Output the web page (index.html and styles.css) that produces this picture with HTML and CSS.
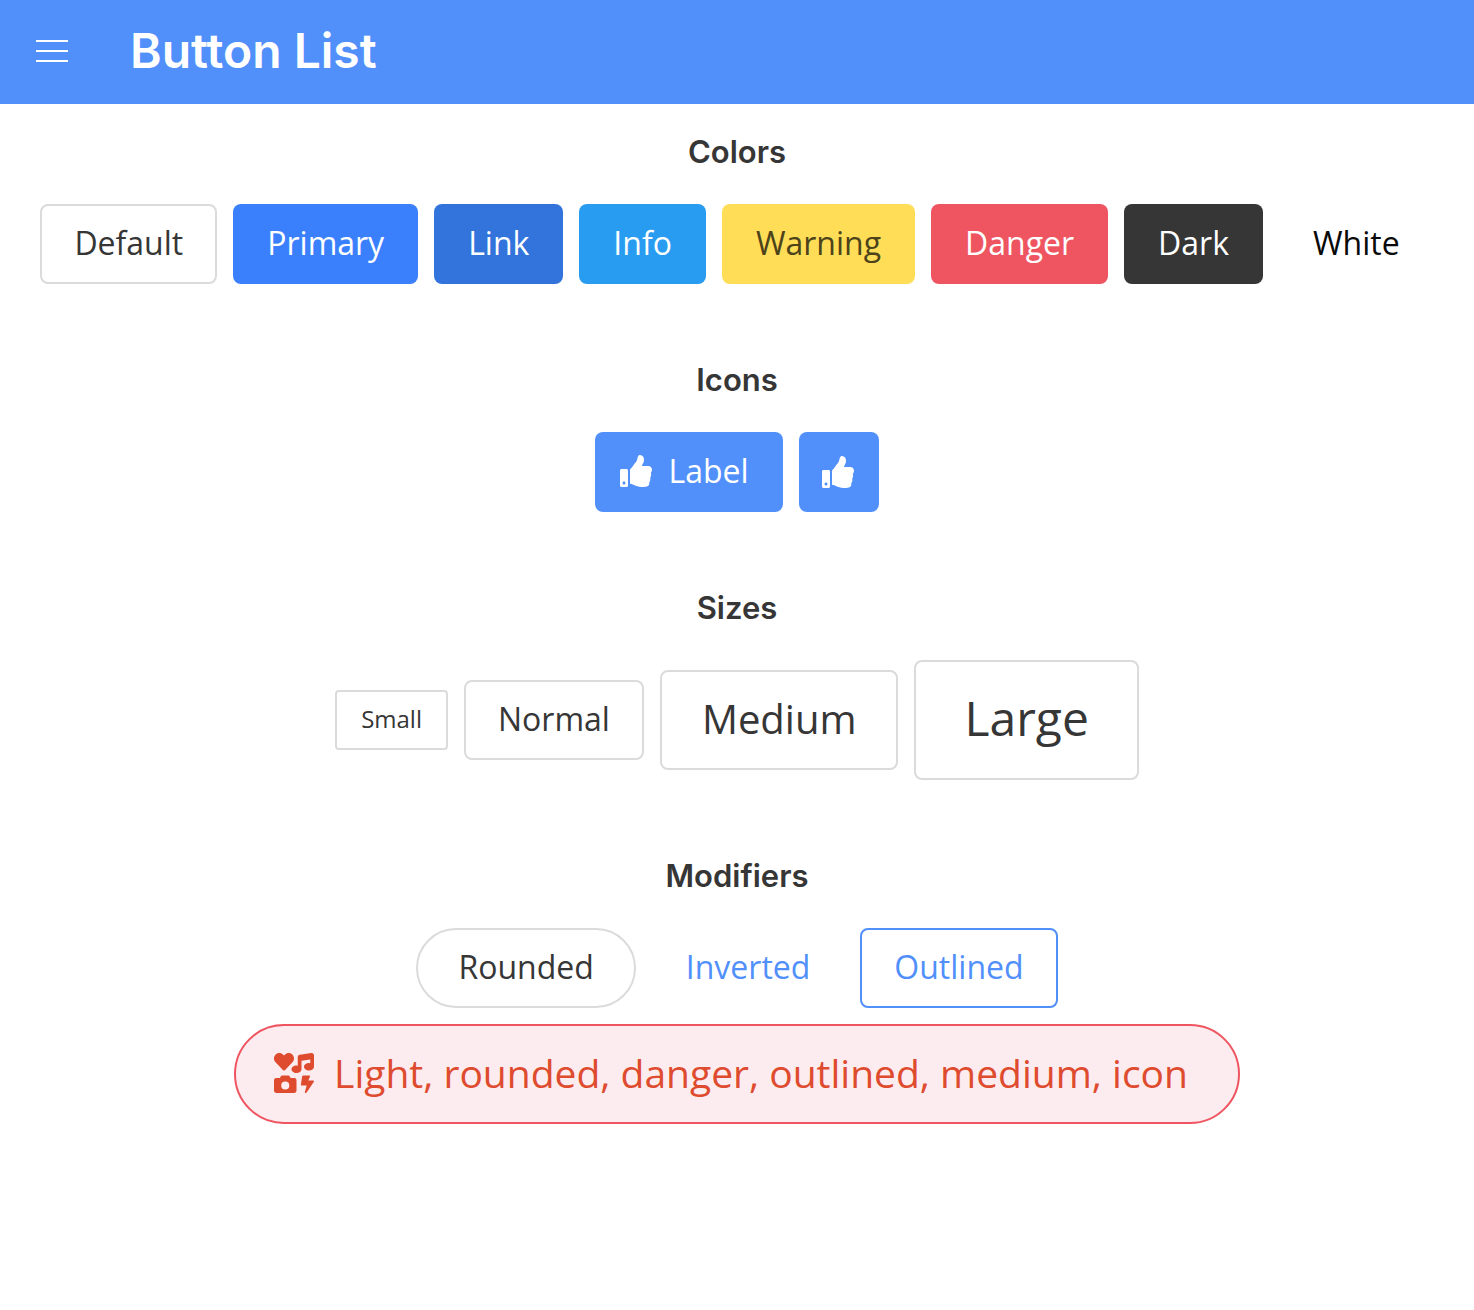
FILE: index.html
```html
<!DOCTYPE html>
<html lang="en">
<head>
  <meta charset="utf-8">
  <meta name="viewport" content="width=device-width, initial-scale=1">
  <title>Button List</title>
  <link rel="stylesheet" href="styles.css">
</head>
<body>
  <svg class="sprite" aria-hidden="true">
    <symbol id="thumbs-up" viewBox="0 0 512 512">
      <path d="M104 224H24c-13.255 0-24 10.745-24 24v240c0 13.255 10.745 24 24 24h80c13.255 0 24-10.745 24-24V248c0-13.255-10.745-24-24-24zM64 472c-13.255 0-24-10.745-24-24s10.745-24 24-24 24 10.745 24 24-10.745 24-24 24zM384 81.452c0 42.416-25.97 66.208-33.277 94.548h101.723c33.397 0 59.397 27.746 59.553 58.098.084 17.938-7.546 37.249-19.439 49.197l-.11.11c9.836 23.337 8.237 56.037-9.308 79.469 8.681 25.895-.069 57.704-16.382 74.757 4.298 17.598 2.244 32.575-6.148 44.632C440.202 511.587 389.616 512 346.839 512l-2.845-.001c-48.287-.017-87.806-17.598-119.56-31.725-15.957-7.099-36.821-15.887-52.651-16.178-6.54-.12-11.783-5.457-11.783-11.998v-213.77c0-3.2 1.282-6.271 3.558-8.521 39.614-39.144 56.648-80.587 89.117-113.111 14.804-14.832 20.188-37.236 25.393-58.902C282.515 39.293 291.817 0 312 0c24 0 72 8 72 81.452z"/>
    </symbol>
    <symbol id="icons" viewBox="0 0 512 512">
      <path d="M116.65 219.35a15.68 15.68 0 0 0 22.65 0l96.75-99.83c28.15-29 26.5-77.1-4.91-103.88C203.75-7.7 163-3.5 137.86 22.44L128 32.58l-9.85-10.14C93.05-3.5 52.25-7.7 24.86 15.64c-31.41 26.78-33 74.85-5 103.88zm143.92 100.49h-48l-7.08-14.24a27.39 27.39 0 0 0-25.66-17.78h-71.71a27.39 27.39 0 0 0-25.66 17.78l-7 14.24h-48A27.45 27.45 0 0 0 0 347.3v137.25A27.44 27.44 0 0 0 27.43 512h233.14A27.45 27.45 0 0 0 288 484.55V347.3a27.45 27.45 0 0 0-27.43-27.46zM144 468a52 52 0 1 1 52-52 52 52 0 0 1-52 52zm355.4-115.9h-60.58l22.36-50.75c2.1-6.65-3.93-13.21-12.18-13.21h-75.59c-6.3 0-11.66 3.9-12.5 9.1l-16.8 106.93c-1 6.3 4.88 11.89 12.5 11.89h62.31l-24.2 83c-1.89 6.65 4.2 12.9 12.23 12.9a13.26 13.26 0 0 0 10.92-5.25l92.4-138.91c4.88-6.91-1.16-15.7-10.87-15.7zM478.08.33L329.51 23.17C314.87 25.42 304 38.92 304 54.83V161.6a83.25 83.25 0 0 0-16-1.7c-35.35 0-64 21.48-64 48s28.65 48 64 48c35.2 0 63.73-21.32 64-47.66V99.66l112-17.22v47.18a83.25 83.25 0 0 0-16-1.7c-35.35 0-64 21.48-64 48s28.65 48 64 48c35.2 0 63.73-21.31 64-47.66V32c0-19.48-16-34.42-33.92-31.67z"/>
    </symbol>
  </svg>

  <header class="navbar">
    <button class="burger" type="button" aria-label="Menu">
      <span class="burger-line"></span>
      <span class="burger-line"></span>
      <span class="burger-line"></span>
    </button>
    <h1 class="navbar-title">Button List</h1>
  </header>

  <main>
    <section class="section">
      <h2 class="section-title">Colors</h2>
      <div class="buttons">
        <button class="button" type="button">Default</button>
        <button class="button is-primary" type="button">Primary</button>
        <button class="button is-link" type="button">Link</button>
        <button class="button is-info" type="button">Info</button>
        <button class="button is-warning" type="button">Warning</button>
        <button class="button is-danger" type="button">Danger</button>
        <button class="button is-dark" type="button">Dark</button>
        <button class="button is-white" type="button">White</button>
      </div>
    </section>

    <section class="section">
      <h2 class="section-title">Icons</h2>
      <div class="buttons">
        <button class="button is-accent has-icon" type="button"><svg class="icon" aria-hidden="true"><use href="#thumbs-up"/></svg>Label</button>
        <button class="button is-accent is-icon-only" type="button" aria-label="Like"><svg class="icon" aria-hidden="true"><use href="#thumbs-up"/></svg></button>
      </div>
    </section>

    <section class="section">
      <h2 class="section-title">Sizes</h2>
      <div class="buttons">
        <button class="button is-small" type="button">Small</button>
        <button class="button" type="button">Normal</button>
        <button class="button is-medium" type="button">Medium</button>
        <button class="button is-large" type="button">Large</button>
      </div>
    </section>

    <section class="section">
      <h2 class="section-title">Modifiers</h2>
      <div class="buttons">
        <button class="button is-rounded" type="button">Rounded</button>
        <button class="button is-inverted" type="button">Inverted</button>
        <button class="button is-outlined" type="button">Outlined</button>
        <button class="button is-medium is-rounded is-danger-light has-icon" type="button"><svg class="icon" aria-hidden="true"><use href="#icons"/></svg>Light, rounded, danger, outlined, medium, icon</button>
      </div>
    </section>
  </main>
</body>
</html>
```
FILE: styles.css
```css
* {
  box-sizing: border-box;
}

body {
  margin: 0;
  background: #fff;
  color: #363636;
  font-family: "Open Sans", "Liberation Sans", sans-serif;
  font-size: 32px;
  font-weight: 400;
}

.sprite {
  display: none;
}

.navbar {
  display: flex;
  align-items: center;
  gap: 62px;
  min-height: 104px;
  padding: 0 36px 2px;
  background: #5190fb;
  color: #fff;
}

.burger {
  display: flex;
  flex-direction: column;
  gap: 8px;
  width: 32px;
  padding: 0;
  border: 0;
  background: none;
  cursor: pointer;
}

.burger-line {
  height: 2px;
  background: #fff;
}

.navbar-title,
.section-title {
  font-family: Inter, "Liberation Sans", sans-serif;
  font-weight: 600;
}

.navbar-title {
  margin: 0;
  font-size: 48px;
  line-height: 72px;
}

.section {
  padding: 24px 24px 48px;
}

.section-title {
  margin: 0 0 28px;
  font-size: 31px;
  line-height: 48px;
  text-align: center;
}

.buttons {
  display: flex;
  flex-wrap: wrap;
  align-items: center;
  justify-content: center;
  gap: 16px;
}

.button {
  display: inline-flex;
  align-items: center;
  justify-content: center;
  height: 80px;
  padding: 0 32px 2px;
  border: 2px solid #dbdbdb;
  border-radius: 8px;
  background: #fff;
  color: #363636;
  font: inherit;
  line-height: 48px;
  white-space: nowrap;
  cursor: pointer;
}

.is-primary,
.is-link,
.is-info,
.is-warning,
.is-danger,
.is-dark,
.is-white,
.is-accent,
.is-inverted {
  border-color: transparent;
  color: #fff;
}

.is-primary { background-color: #3a80fc; }
.is-link { background-color: #3273dc; }
.is-info { background-color: #289cf0; }
.is-warning { background-color: #ffdd57; color: #4c431a; }
.is-danger { background-color: #ee5561; }
.is-dark { background-color: #363636; }
.is-white { color: #0a0a0a; }
.is-accent { background-color: #5190fb; }
.is-inverted { color: #5190fb; }

.is-outlined {
  border-color: #5190fb;
  color: #5190fb;
}

.is-small {
  height: 60px;
  padding: 0 24px 2px;
  border-radius: 4px;
  font-size: 24px;
}

.is-medium {
  height: 100px;
  padding: 0 40px 2px;
  font-size: 40px;
}

.is-large {
  height: 120px;
  padding: 0 48px 4px;
  font-size: 48px;
}

.is-rounded {
  padding-right: 40px;
  padding-left: 40px;
  border-radius: 60px;
}

.is-danger-light {
  border-color: #ee5561;
  background: #fdecef;
  color: #de4b2e;
  font-size: 39px;
}

.icon {
  flex: none;
  width: 32px;
  height: 32px;
  fill: currentColor;
}

.is-medium .icon {
  width: 40px;
  height: 40px;
}

.has-icon {
  gap: 16px;
  padding-left: 23px;
}

.has-icon.is-medium {
  gap: 20px;
  padding-right: 50px;
  padding-left: 38px;
}

.is-icon-only {
  width: 80px;
  padding: 0 2px 0 0;
}
```
